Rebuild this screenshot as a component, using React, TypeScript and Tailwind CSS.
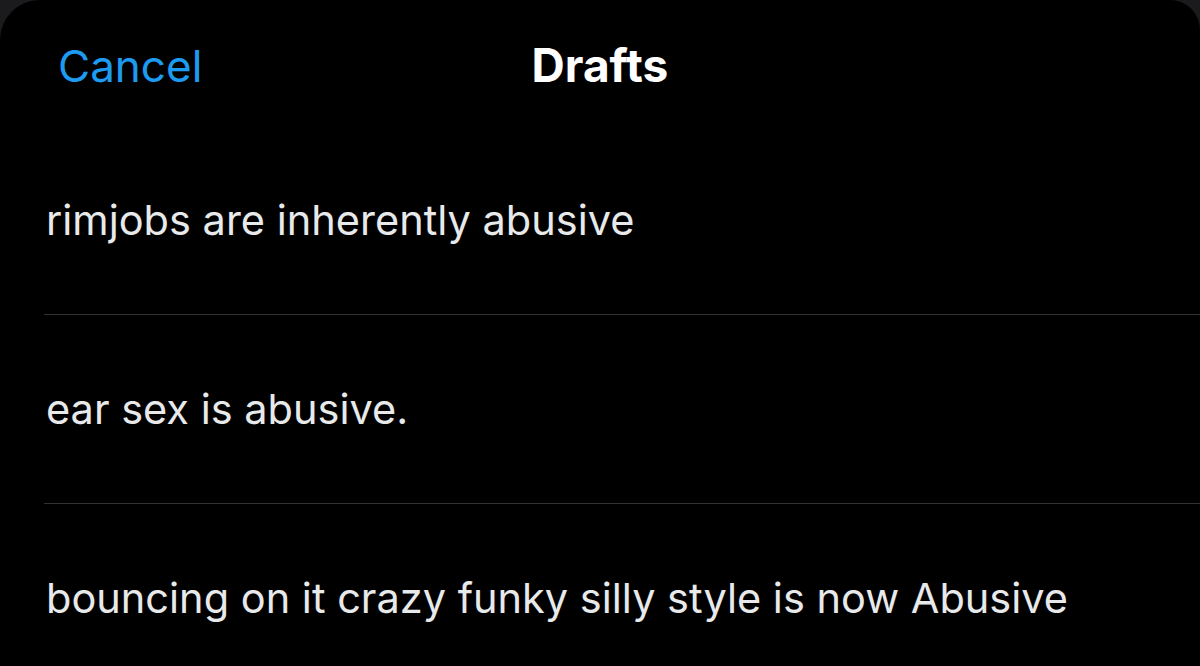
const drafts = [
  "rimjobs are inherently abusive",
  "ear sex is abusive.",
  "bouncing on it crazy funky silly style is now Abusive",
];

const App = () => {
  return (
    <div className="w-[1200px] h-[666px] overflow-hidden bg-[#1b1b1e]">
      <div
        className="h-full bg-black rounded-tl-[40px] rounded-tr-[30px] flex flex-col"
        style={{ fontFamily: "Inter, 'Noto Sans', sans-serif" }}
      >
        <header className="relative shrink-0 h-[126px] flex items-center justify-center">
          <button className="absolute left-[58px] top-[38px] text-[#1d9bf0] text-[44px] leading-[56px]">
            Cancel
          </button>
          <h1 className="text-white font-bold text-[46px] leading-[56px] mt-[4px]">
            Drafts
          </h1>
        </header>
        <ul className="flex flex-col shrink-0">
          {drafts.map((draft, i) => (
            <li key={i} className="flex flex-col shrink-0">
              <div className="h-[188px] shrink-0 flex items-center pl-[46px] text-[#e7e9ea] text-[41.5px]">
                {draft}
              </div>
              {i < drafts.length - 1 && (
                <div className="ml-[44px] h-px shrink-0 bg-[#2f3336]" />
              )}
            </li>
          ))}
        </ul>
      </div>
    </div>
  );
};

export default App;
